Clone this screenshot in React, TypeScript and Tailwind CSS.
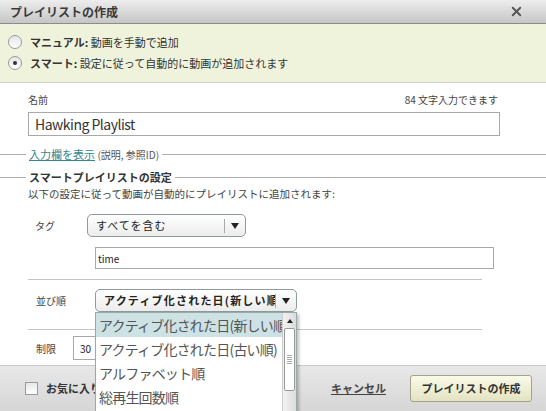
import { X } from "lucide-react";

const font = {
  fontFamily:
    '"Noto Sans CJK JP", "Noto Sans", "Liberation Sans", sans-serif',
};

function Radio({ checked }: { checked?: boolean }) {
  return (
    <span className="flex h-[14px] w-[14px] items-center justify-center rounded-full border border-[#9a9a9a] bg-gradient-to-b from-[#e6e6e6] to-white">
      {checked && (
        <span className="h-[4px] w-[4px] rounded-full bg-[#333]" />
      )}
    </span>
  );
}

function Select({
  label,
  width,
  bold,
}: {
  label: string;
  width: string;
  bold?: boolean;
}) {
  return (
    <div
      className={`flex h-[23px] items-center rounded-[5px] border border-[#8f9a9c] bg-gradient-to-b from-white to-[#ececec] ${width}`}
    >
      <span
        className={`min-w-0 flex-1 overflow-hidden whitespace-nowrap pl-[8px] pr-[4px] text-[11px] text-[#222] ${
          bold ? "font-bold tracking-[1.2px]" : "tracking-[1px]"
        }`}
      >
        {label}
      </span>
      <span className="h-[14px] w-px shrink-0 bg-[#a8a8a8]" />
      <span className="flex w-[20px] shrink-0 justify-center">
        <svg width="8" height="6" viewBox="0 0 8 6">
          <path d="M0 0 L8 0 L4 6 Z" fill="#222" />
        </svg>
      </span>
    </div>
  );
}

function Divider({ label, link }: { label: React.ReactNode; link?: boolean }) {
  return (
    <div className="flex items-center">
      <div className="h-px w-[26px] bg-[#b0b0b0]" />
      <div
        className={`px-[3px] text-[11px] leading-[14px] ${
          link ? "text-[#555]" : "font-bold text-[#333]"
        }`}
      >
        {label}
      </div>
      <div className="h-px flex-1 bg-[#b0b0b0]" />
    </div>
  );
}

export default function App() {
  const options = [
    "アクティブ化された日(新しい順)",
    "アクティブ化された日(古い順)",
    "アルファベット順",
    "総再生回数順",
  ];

  return (
    <div
      className="relative h-[411px] w-[546px] overflow-hidden bg-white"
      style={font}
    >
      {/* Title */}
      <div className="flex h-[24px] items-center justify-between border-b border-[#8c8c8c] bg-gradient-to-b from-[#ededed] to-[#c6c6c6] pl-[10px] pr-[22px]">
        <span className="text-[12px] font-bold text-[#3a3a3a]">
          プレイリストの作成
        </span>
        <X size={15} strokeWidth={3} className="text-[#555]" />
      </div>

      {/* Mode */}
      <div className="flex h-[59px] flex-col gap-[4px] border-b border-[#cfcfcf] bg-[#f0f3dc] pl-[8px] pt-[10px]">
        <div className="flex items-center gap-[8px]">
          <Radio />
          <span className="text-[11px] text-[#333]">
            <span className="font-bold">マニュアル:</span> 動画を手動で追加
          </span>
        </div>
        <div className="flex items-center gap-[8px]">
          <Radio checked />
          <span className="text-[11px] text-[#333]">
            <span className="font-bold">スマート:</span>{" "}
            設定に従って自動的に動画が追加されます
          </span>
        </div>
      </div>

      {/* Body */}
      <div className="h-[282px]">
        <div className="flex justify-between pl-[28px] pr-[48px] pt-[10px] text-[10px] leading-[14px] text-[#444]">
          <span>名前</span>
          <span>84 文字入力できます</span>
        </div>
        <div className="ml-[28px] mt-[5px] flex h-[24px] w-[472px] items-center border border-[#a9a9a9] px-[6px] text-[14px] tracking-[-0.5px] text-[#333]">
          Hawking Playlist
        </div>

        <div className="mt-[11px]">
          <Divider
            link
            label={
              <>
                <span className="text-[#35868f] underline">入力欄を表示</span>{" "}
                <span className="text-[10px]">(説明, 参照ID)</span>
              </>
            }
          />
        </div>
        <div className="mt-[8px]">
          <Divider label="スマートプレイリストの設定" />
        </div>
        <div className="ml-[28px] mt-[3px] text-[10.5px] leading-[14px] text-[#444]">
          以下の設定に従って動画が自動的にプレイリストに追加されます:
        </div>

        <div className="mt-[13px] flex items-center">
          <span className="w-[87px] pl-[35px] text-[10px] text-[#444]">
            タグ
          </span>
          <Select label="すべてを含む" width="w-[159px]" />
        </div>
        <div className="ml-[95px] mt-[10px] flex h-[22px] w-[399px] items-center border border-[#a9a9a9] px-[2px] text-[10px] text-[#222]">
          time
        </div>

        <div className="ml-[28px] mt-[10px] h-px w-[454px] bg-[#c4c4c4]" />

        <div className="mt-[9px] flex items-center">
          <span className="w-[95px] pl-[36px] text-[10px] text-[#444]">
            並び順
          </span>
          <Select
            bold
            label="アクティブ化された日(新しい順)"
            width="w-[202px]"
          />
        </div>

        <div className="ml-[28px] mt-[17px] h-px w-[454px] bg-[#c4c4c4]" />

        <div className="mt-[6px] flex items-center">
          <span className="w-[73px] pl-[36px] text-[10px] text-[#444]">
            制限
          </span>
          <div className="flex h-[24px] w-[60px] items-center border border-[#a9a9a9] px-[6px] text-[10px] text-[#222]">
            30
          </div>
        </div>
      </div>

      {/* Footer */}
      <div className="flex h-[46px] items-center border-t border-[#c8c8c8] bg-gradient-to-b from-[#e8e8e8] to-[#d6d6d6] pl-[25px] pr-[14px]">
        <span className="h-[13px] w-[13px] border border-[#9a9a9a] bg-gradient-to-b from-[#e8e8e8] to-white" />
        <span className="ml-[8px] text-[11px] font-bold text-[#333]">
          お気に入りに追加
        </span>
        <span className="ml-auto text-[11px] font-bold text-[#444] underline">
          キャンセル
        </span>
        <button className="ml-[24px] h-[27px] w-[122px] rounded-[3px] border border-[#a3a38a] bg-gradient-to-b from-[#fafae8] to-[#e3e3c2] text-[11px] font-bold text-[#333]">
          プレイリストの作成
        </button>
      </div>

      {/* Open sort dropdown */}
      <div className="absolute left-[95px] top-[312px] flex h-[110px] w-[202px] border border-[#9aa] bg-white shadow-[2px_2px_3px_rgba(0,0,0,0.25)]">
        <div className="min-w-0 flex-1 overflow-hidden">
          {options.map((o, i) => (
            <div
              key={o}
              className={`h-[24px] whitespace-nowrap pl-[3px] text-[14px] leading-[24px] tracking-[-0.8px] text-[#555] ${
                i === 0 ? "bg-[#cde2e5]" : ""
              }`}
            >
              {o}
            </div>
          ))}
        </div>
        <div className="flex w-[14px] flex-col border-l border-[#ccc] bg-gradient-to-r from-[#f2f2f2] to-[#dcdcdc]">
          <div className="flex h-[15px] items-center justify-center">
            <svg width="6" height="4" viewBox="0 0 6 4">
              <path d="M0 4 L6 4 L3 0 Z" fill="#222" />
            </svg>
          </div>
          <div className="mx-[1px] flex h-[63px] flex-col items-center justify-center gap-[1px] rounded-[2px] border border-[#999] bg-white">
            <span className="h-px w-[5px] bg-[#aaa]" />
            <span className="h-px w-[5px] bg-[#aaa]" />
            <span className="h-px w-[5px] bg-[#aaa]" />
            <span className="h-px w-[5px] bg-[#aaa]" />
            <span className="h-px w-[5px] bg-[#aaa]" />
          </div>
        </div>
      </div>
    </div>
  );
}
